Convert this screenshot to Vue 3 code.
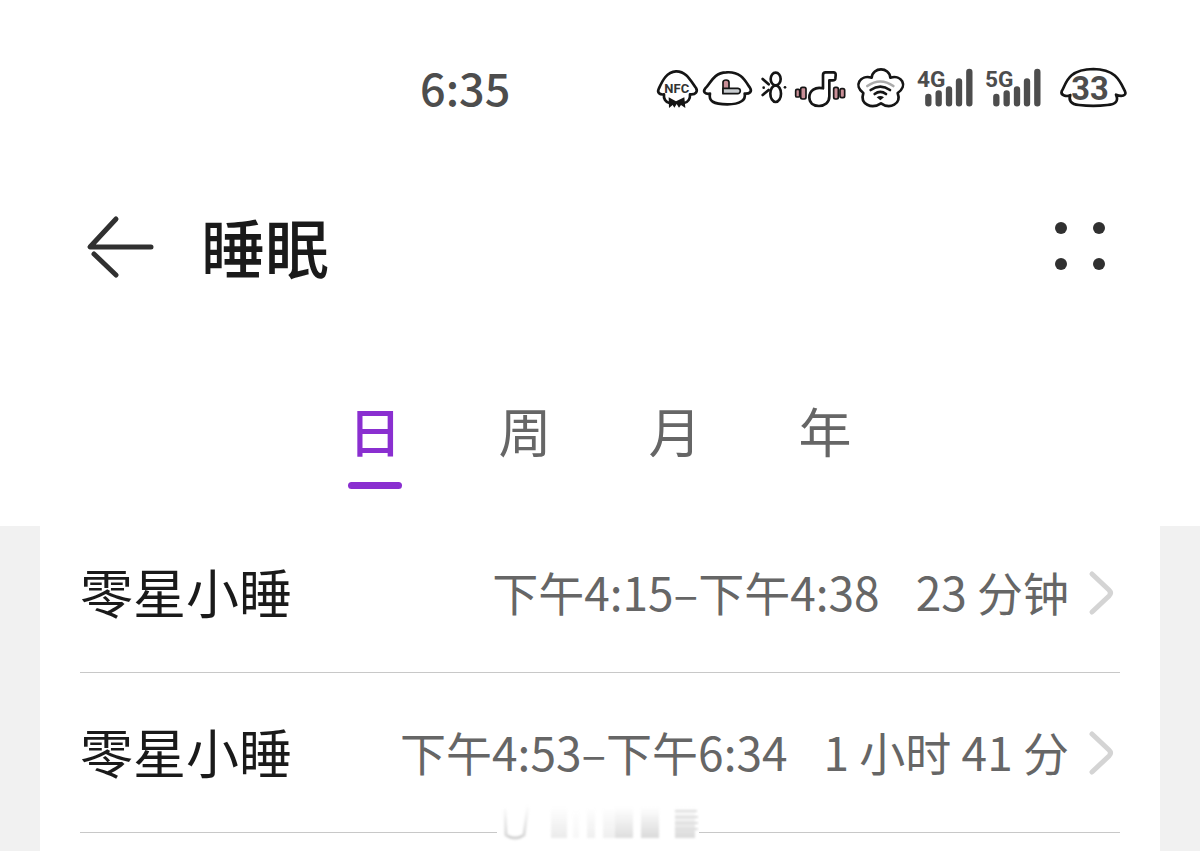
<template>
  <div class="page">
    <header class="top">
      <div class="status-bar">
        <time class="clock">6:35</time>
        <div class="status-icons">
          <svg width="40" height="42" viewBox="51 40 120 126" class="line-icon">
            <path d="M72 119C59 121 51 114 56 103C64 86 77 51 108 50C141 49 154 83 168 100C174 110 168 121 150 119C151 132 144 143 132 145M88 145C77 143 70 132 72 119" />
            <text x="73" y="116" class="nfc">NFC</text>
            <path class="solid" d="M86 128L108 140L133 128L136 160L123 151L117 159L110 148L103 159L98 151L87 160Z" />
          </svg>
          <svg width="49" height="42" viewBox="189 40 147 126" class="line-icon">
            <path d="M210 117C196 119 187 112 196 101C211 89 219 54 259 53C302 50 315 77 329 98C338 111 329 118 314 117C318 135 302 149 262 149C220 149 205 139 210 117Z" />
            <path d="M249 116V82Q250 76 258 76Q267 76 267 83V101" class="pink" />
            <path d="M249 101H294Q301 102 301 109Q300 117 293 117H249Z" class="grey" />
          </svg>
          <svg width="30" height="42" viewBox="354 40 90 126" class="line-icon">
            <ellipse cx="407" cy="73" rx="15" ry="19" />
            <ellipse cx="407" cy="117" rx="16" ry="25" />
            <path d="M368 73L386 89M368 121L386 106" />
            <circle cx="371" cy="99" r="4" class="solid" />
            <circle cx="435" cy="98" r="4" class="solid" />
          </svg>
          <svg width="54" height="42" viewBox="27 40 162 126" class="line-icon">
            <path d="M114 101V61Q114 53 122 53H145Q153 53 152 62L151 72Q150 77 143 77H133V125C133 144 119 154 102 154C84 154 73 144 73 128C73 108 91 95 114 101Z" />
            <g class="pink">
              <rect x="32" y="104" width="12" height="23" rx="4" />
              <rect x="47" y="98" width="16" height="35" rx="5" />
              <rect x="146" y="98" width="14" height="35" rx="5" />
              <rect x="165" y="102" width="14" height="27" rx="5" />
            </g>
          </svg>
          <svg width="55" height="42" viewBox="207 40 165 126" class="line-icon">
            <path d="M260 69C263 36 313 36 316 69C350 59 370 94 338 115C350 148 315 165 288 146C260 165 224 149 235 115C205 94 225 59 260 69Z" />
            <path d="M247 94Q286 67 325 94" class="faded" />
            <path d="M257 106Q286 86 315 106M269 118Q286 105 303 118" />
            <path d="M275 128Q286 120 297 128L286 137Z" class="solid" />
          </svg>
          <svg v-for="label in networks" :key="label" width="62" height="42" viewBox="30 40 186 126">
            <text x="36" y="97" class="network">{{ label }}</text>
            <path d="M70 127V146M101 116V146M132 104V146M162 80V146M193 52V146" class="bars" />
          </svg>
          <svg width="76" height="42" viewBox="438 40 228 126" class="line-icon">
            <path d="M496 121C485 128 466 121 470 110C483 91 484 44 565 43C633 44 645 80 660 110C666 123 650 127 633 120C642 140 631 150 607 151Q565 156 522 151C497 149 490 136 496 121Z" />
            <text x="499" y="135" class="battery">33</text>
          </svg>
        </div>
      </div>

      <div class="title-bar">
        <button class="icon-button" aria-label="返回">
          <svg width="70" height="64" viewBox="0 0 70 64" class="back">
            <path d="M31 4L5 32H66" />
            <path d="M31 60L9 39" />
          </svg>
        </button>
        <h1>睡眠</h1>
        <button class="icon-button" aria-label="更多">
          <svg width="52" height="50" viewBox="0 0 52 50" fill="#303030">
            <circle cx="7" cy="6" r="6" />
            <circle cx="45" cy="6" r="6" />
            <circle cx="7" cy="42" r="6" />
            <circle cx="45" cy="42" r="6" />
          </svg>
        </button>
      </div>

      <nav class="tabs">
        <button
          v-for="tab in tabs"
          :key="tab"
          class="tab"
          :class="{ active: tab === activeTab }"
          @click="activeTab = tab"
        >
          {{ tab }}
        </button>
      </nav>
    </header>

    <main class="content">
      <ul class="naps">
        <li v-for="nap in naps" :key="nap.range">
          <a href="#" class="nap" @click.prevent>
            <span class="name">零星小睡</span>
            <span class="range">{{ nap.range }}</span>
            <span class="duration">{{ nap.duration }}</span>
            <svg width="26" height="46" viewBox="0 0 26 46" class="chevron">
              <path d="M4 4L21 20Q24 23 21 26L4 42" />
            </svg>
          </a>
        </li>
      </ul>

      <svg class="smudge" width="208" height="42" viewBox="0 0 208 42" aria-hidden="true">
        <defs>
          <linearGradient id="fade" x1="0" y1="0" x2="0" y2="1">
            <stop offset="0" stop-color="#bbb" stop-opacity="0" />
            <stop offset="1" stop-color="#bbb" stop-opacity="0.6" />
          </linearGradient>
          <filter id="soft"><feGaussianBlur stdDeviation="1" /></filter>
        </defs>
        <rect x="2" y="2" width="202" height="36" fill="#fff" />
        <g filter="url(#soft)">
          <path d="M10 8L11 34Q20 40 29 34L33 4" fill="none" stroke="url(#fade)" stroke-width="3" />
          <path d="M12 35Q20 39 28 35" fill="none" stroke="#ccc" stroke-width="1" />
          <rect
            v-for="bar in smudgeBars"
            :key="bar.x"
            :x="bar.x"
            y="6"
            :width="bar.width"
            height="31"
            fill="url(#fade)"
            :opacity="bar.opacity"
          />
          <path d="M180 10H202M180 16H203M180 22H203M180 28H203" stroke="#ddd" stroke-width="2" />
        </g>
      </svg>
    </main>
  </div>
</template>

<script setup>
import { ref } from 'vue';

const networks = ['4G', '5G'];
const tabs = ['日', '周', '月', '年'];
const activeTab = ref('日');

const naps = [
  { range: '下午4:15–下午4:38', duration: '23 分钟' },
  { range: '下午4:53–下午6:34', duration: '1 小时 41 分' },
];

const smudgeBars = [
  { x: 56, width: 16, opacity: 0.5 },
  { x: 78, width: 6, opacity: 0.2 },
  { x: 92, width: 8, opacity: 0.4 },
  { x: 108, width: 12, opacity: 0.4 },
  { x: 120, width: 18, opacity: 0.8 },
  { x: 146, width: 18, opacity: 0.9 },
  { x: 180, width: 20, opacity: 0.9 },
];
</script>

<style>
body {
  margin: 0;
  background: #f1f1f1;
}
</style>

<style scoped>
.page {
  display: flex;
  flex-direction: column;
  min-height: 100vh;
  font-family: 'Noto Sans CJK SC', sans-serif;
  color: #1a1a1a;
}

button {
  padding: 0;
  border: none;
  background: none;
  font-family: inherit;
  cursor: pointer;
}

svg {
  display: block;
  flex-shrink: 0;
  overflow: visible;
}

.top {
  background: #fff;
  padding-bottom: 37px;
}

.status-bar {
  display: flex;
  align-items: center;
  justify-content: space-between;
  padding: 54px 73px 0 35%;
}

.clock {
  padding-bottom: 4px;
  font-size: 45px;
  line-height: 66px;
  font-weight: 500;
  color: #4d4d4d;
}

.status-icons {
  display: flex;
  gap: 6px;
}

.line-icon {
  fill: none;
  stroke: #151515;
  stroke-width: 8;
  stroke-linecap: round;
  stroke-linejoin: round;
}

.line-icon text {
  stroke: none;
}

.line-icon .solid {
  fill: #151515;
  stroke: none;
}

.pink {
  fill: #c98f97;
  stroke-width: 5;
}

.grey {
  fill: #c9cdd0;
  stroke-width: 5;
}

.faded {
  stroke: #aaa;
}

.nfc {
  font-family: Roboto, sans-serif;
  font-size: 39px;
  font-weight: 700;
  fill: #333;
}

.network {
  font-family: Roboto, sans-serif;
  font-size: 68px;
  font-weight: 700;
  fill: #4d4d4d;
}

.bars {
  stroke: #4d4d4d;
  stroke-width: 19;
  stroke-linecap: round;
}

.battery {
  font-family: Roboto, sans-serif;
  font-size: 98px;
  font-weight: 700;
  fill: #4d4d4d;
}

.title-bar {
  display: flex;
  align-items: center;
  padding: 73px 94px 0 85px;
}

.back {
  fill: none;
  stroke: #303030;
  stroke-width: 5;
  stroke-linecap: round;
  stroke-linejoin: round;
}

h1 {
  flex: 1;
  margin: 0 0 0 46px;
  padding-bottom: 4px;
  font-size: 64px;
  line-height: 96px;
  font-weight: 500;
}

.tabs {
  display: flex;
  justify-content: center;
  gap: 96px;
  margin-top: 95px;
}

.tab {
  width: 54px;
  font-size: 53px;
  line-height: 76px;
  color: #666;
}

.tab::after {
  content: '';
  display: block;
  height: 7px;
  margin-top: 14px;
  border-radius: 4px;
}

.tab.active {
  color: #8a2fd0;
  font-weight: 500;
}

.tab.active::after {
  background: #8a2fd0;
}

.content {
  position: relative;
  flex: 1;
  margin: 0 40px;
  padding: 0 40px;
  background: #fff;
}

.naps {
  margin: 0;
  padding: 0;
  list-style: none;
}

.nap {
  display: flex;
  align-items: center;
  padding: 40px 6px 39px 0;
  border-bottom: 1px solid #c8c8c8;
  font-size: 46px;
  line-height: 76px;
  color: #666;
  text-decoration: none;
  white-space: nowrap;
}

li:first-child .nap {
  padding-top: 27px;
}

.nap span {
  padding-bottom: 4px;
}

.name {
  flex: 1;
  font-size: 53px;
  color: #1a1a1a;
}

.duration {
  margin-left: 36px;
}

.chevron {
  margin-left: 19px;
  fill: none;
  stroke: #d4d4d4;
  stroke-width: 5;
  stroke-linecap: round;
}

/* faint mark lying over the lower divider */
.smudge {
  position: absolute;
  left: 455px;
  top: 275px;
}
</style>
